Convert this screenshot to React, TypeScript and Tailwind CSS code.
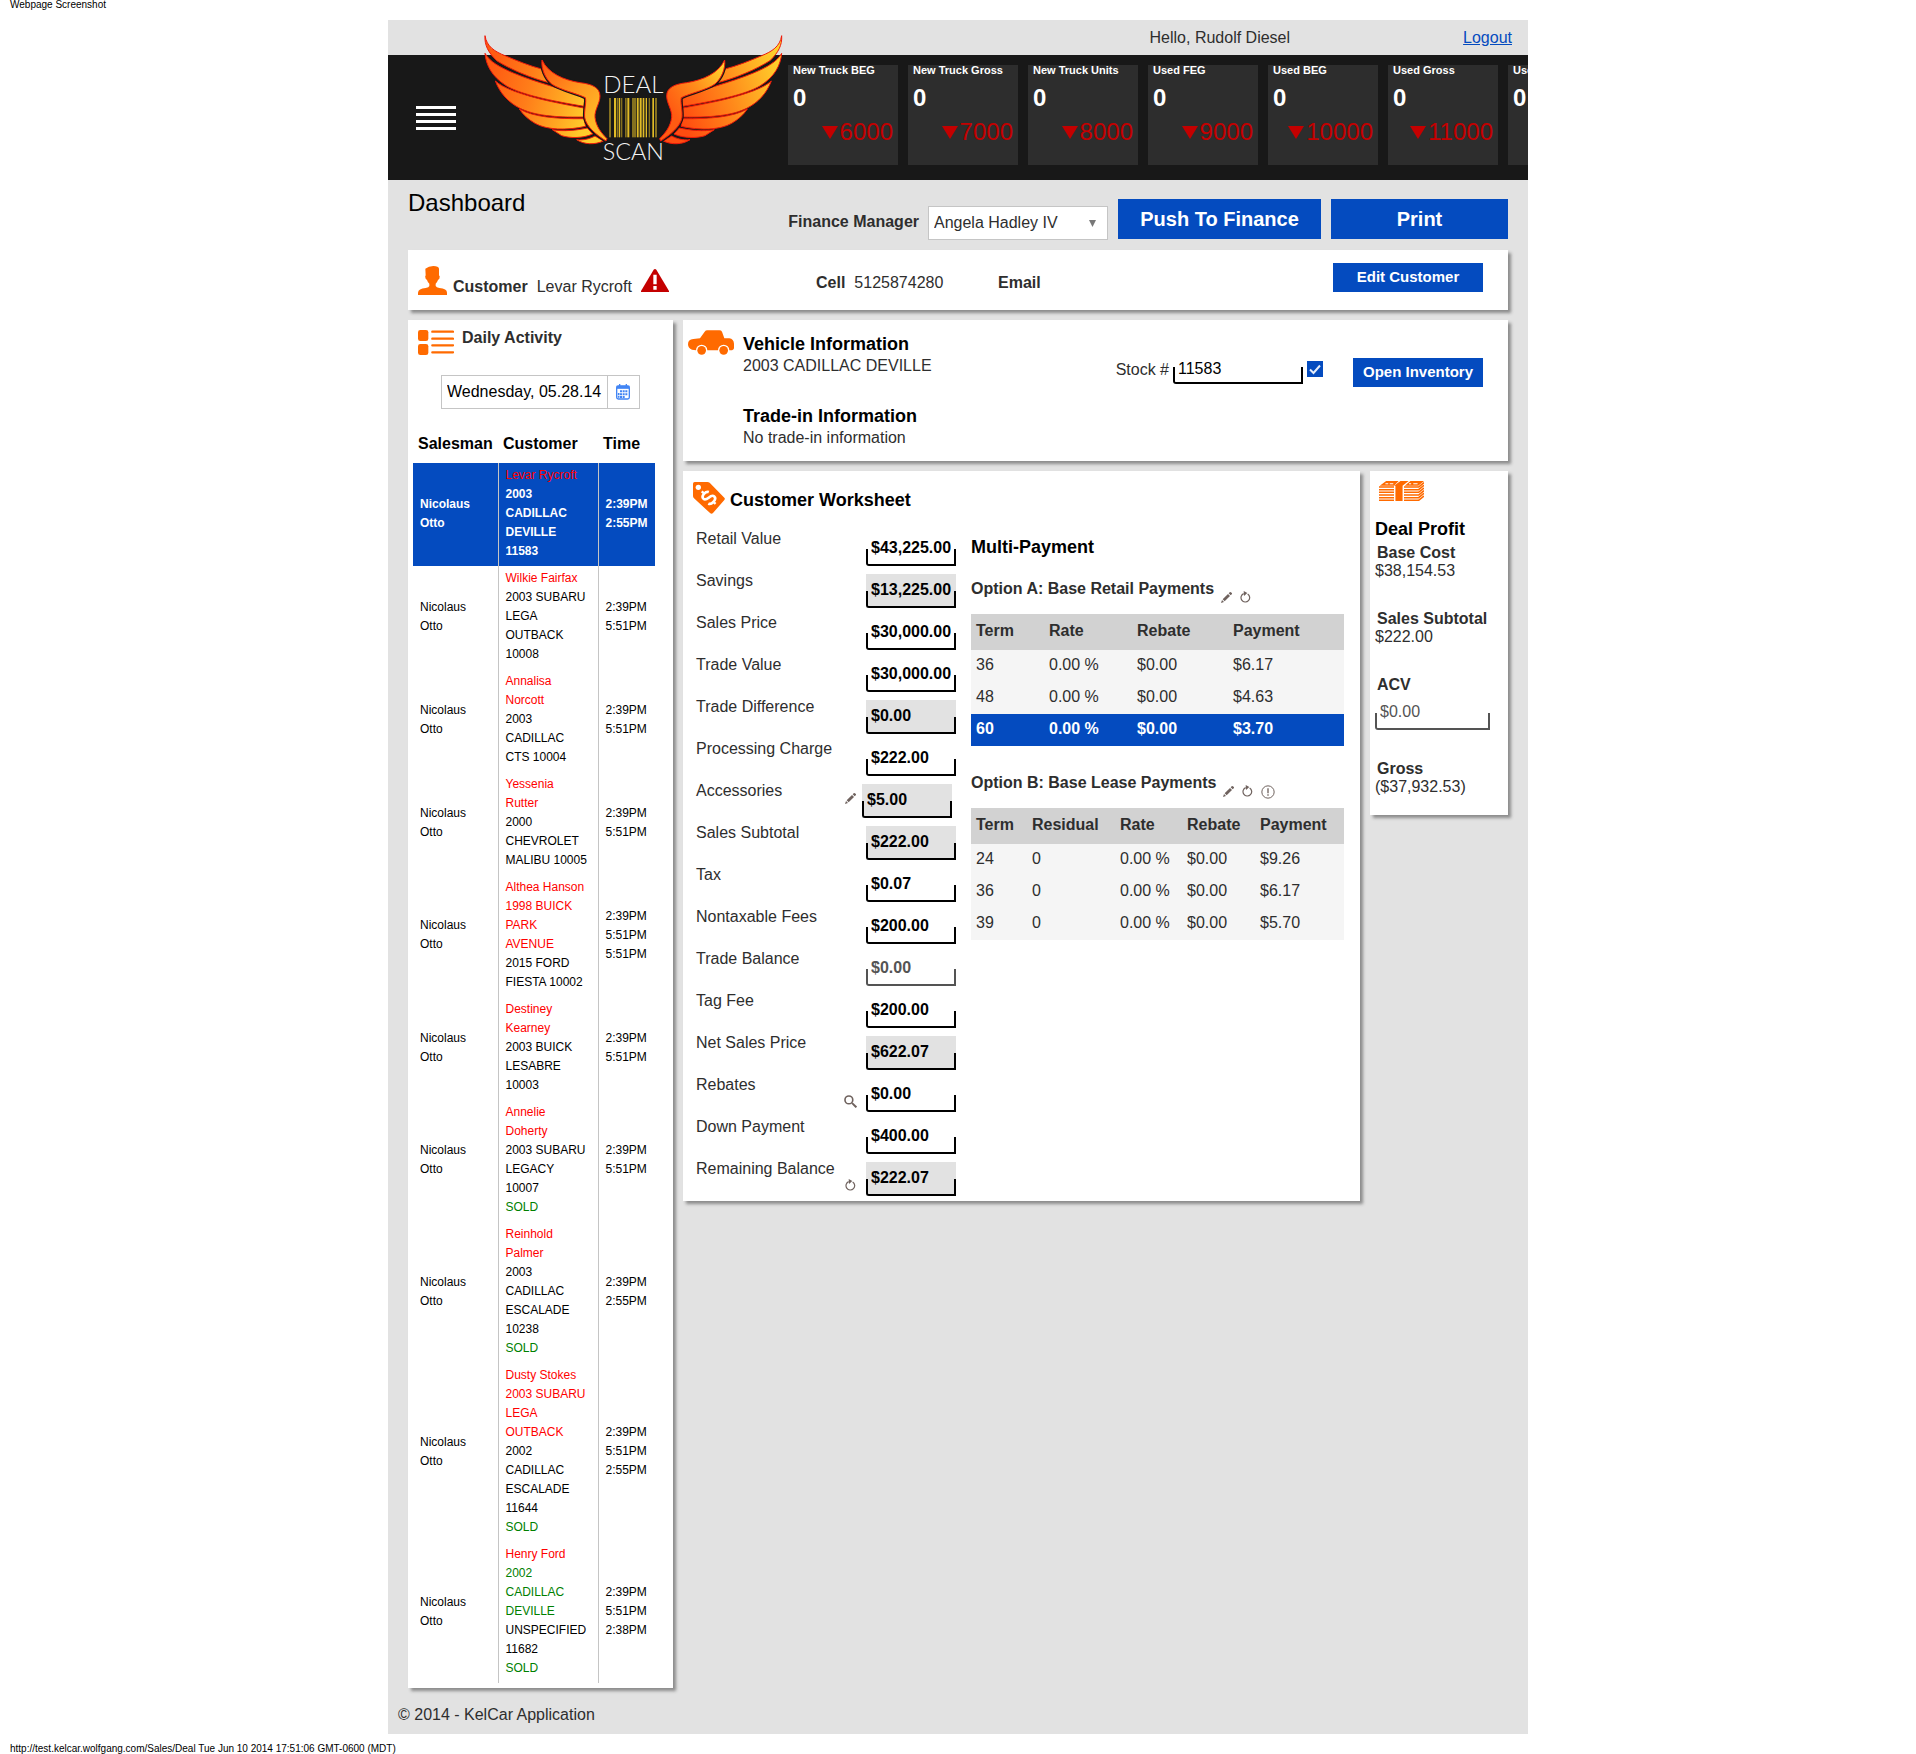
import React from "react";

type Line = { t: string; c?: "red" | "green" };
type Deal = { lines: Line[]; times: string[]; active?: boolean };

const r = (t: string): Line => ({ t, c: "red" });
const g = (t: string): Line => ({ t, c: "green" });
const k = (t: string): Line => ({ t });

const deals: Deal[] = [
  { active: true, lines: [r("Levar Rycroft"), k("2003"), k("CADILLAC"), k("DEVILLE"), k("11583")], times: ["2:39PM", "2:55PM"] },
  { lines: [r("Wilkie Fairfax"), k("2003 SUBARU"), k("LEGA"), k("OUTBACK"), k("10008")], times: ["2:39PM", "5:51PM"] },
  { lines: [r("Annalisa"), r("Norcott"), k("2003"), k("CADILLAC"), k("CTS 10004")], times: ["2:39PM", "5:51PM"] },
  { lines: [r("Yessenia"), r("Rutter"), k("2000"), k("CHEVROLET"), k("MALIBU 10005")], times: ["2:39PM", "5:51PM"] },
  { lines: [r("Althea Hanson"), r("1998 BUICK"), r("PARK"), r("AVENUE"), k("2015 FORD"), k("FIESTA 10002")], times: ["2:39PM", "5:51PM", "5:51PM"] },
  { lines: [r("Destiney"), r("Kearney"), k("2003 BUICK"), k("LESABRE"), k("10003")], times: ["2:39PM", "5:51PM"] },
  { lines: [r("Annelie"), r("Doherty"), k("2003 SUBARU"), k("LEGACY"), k("10007"), g("SOLD")], times: ["2:39PM", "5:51PM"] },
  { lines: [r("Reinhold"), r("Palmer"), k("2003"), k("CADILLAC"), k("ESCALADE"), k("10238"), g("SOLD")], times: ["2:39PM", "2:55PM"] },
  { lines: [r("Dusty Stokes"), r("2003 SUBARU"), r("LEGA"), r("OUTBACK"), k("2002"), k("CADILLAC"), k("ESCALADE"), k("11644"), g("SOLD")], times: ["2:39PM", "5:51PM", "2:55PM"] },
  { lines: [r("Henry Ford"), g("2002"), g("CADILLAC"), g("DEVILLE"), k("UNSPECIFIED"), k("11682"), g("SOLD")], times: ["2:39PM", "5:51PM", "2:38PM"] },
];

const tiles = [
  ["New Truck BEG", "6000"],
  ["New Truck Gross", "7000"],
  ["New Truck Units", "8000"],
  ["Used FEG", "9000"],
  ["Used BEG", "10000"],
  ["Used Gross", "11000"],
  ["Used Units", "12000"],
];

type Row = { label: string; value: string; calc?: boolean; disabled?: boolean; icon?: "pencil" | "search" | "refresh" };
const worksheet: Row[] = [
  { label: "Retail Value", value: "$43,225.00" },
  { label: "Savings", value: "$13,225.00", calc: true },
  { label: "Sales Price", value: "$30,000.00" },
  { label: "Trade Value", value: "$30,000.00" },
  { label: "Trade Difference", value: "$0.00", calc: true },
  { label: "Processing Charge", value: "$222.00" },
  { label: "Accessories", value: "$5.00", calc: true, icon: "pencil" },
  { label: "Sales Subtotal", value: "$222.00", calc: true },
  { label: "Tax", value: "$0.07" },
  { label: "Nontaxable Fees", value: "$200.00" },
  { label: "Trade Balance", value: "$0.00", disabled: true },
  { label: "Tag Fee", value: "$200.00" },
  { label: "Net Sales Price", value: "$622.07", calc: true },
  { label: "Rebates", value: "$0.00", icon: "search" },
  { label: "Down Payment", value: "$400.00" },
  { label: "Remaining Balance", value: "$222.07", calc: true, icon: "refresh" },
];

const panel = "bg-white shadow-[3px_3px_3px_#8c8c8c]";
const bracket =
  "relative after:pointer-events-none after:absolute after:inset-x-0 after:bottom-0 after:h-[17px] after:rounded-bl-[3px] after:border-2 after:border-t-0 after:content-['']";

function PencilIcon() {
  return (
    <svg viewBox="0 0 33 33" className="block size-[11px]" fill="#6f625e">
      <path d="M0 33 3 24 9 30ZM5 22 21 6 27 12 11 28ZM23 4 27 0Q30 0 33 4V6L29 10Z" />
    </svg>
  );
}

function RefreshIcon() {
  return (
    <svg viewBox="0 0 33 36" className="block h-3 w-[11px]">
      <path d="M11 8A13 13 0 1 0 23 9" fill="none" stroke="#6f625e" strokeWidth="3.6" />
      <path d="M11 0 22 6 12 15Z" fill="#6f625e" />
    </svg>
  );
}

function SearchIcon() {
  return (
    <svg viewBox="0 0 40 40" className="block size-[13px]" fill="none" stroke="#6f625e">
      <circle cx="15" cy="15" r="12" strokeWidth="5" />
      <path d="M25 25 38 38" strokeWidth="6" />
    </svg>
  );
}

function AlertIcon() {
  return (
    <svg viewBox="0 0 42 42" className="block size-3.5" fill="none" stroke="#6f625e">
      <circle cx="21" cy="21" r="18.5" strokeWidth="3" />
      <path d="M21 10V25M21 28V32" strokeWidth="4" />
    </svg>
  );
}

const feathers = [
  "M15 17C20 50 45 65 75 77C110 92 150 108 185 117C190 135 200 150 214 160C150 144 90 117 50 92C25 68 13 45 15 17Z",
  "M15 70C30 96 60 112 100 129C170 158 250 178 315 199L312 229C210 212 125 194 80 168C35 140 18 105 15 70Z",
  "M46 153C70 175 120 191 180 207C230 219 280 228 312 234L311 261C220 263 160 255 120 235C85 217 60 190 46 153Z",
  "M118 237C160 261 230 267 312 266L317 289C260 302 200 300 165 280C145 268 130 255 118 237Z",
  "M217 299C250 305 290 301 322 294L338 312C310 325 270 325 245 317Z",
  "M290 329C312 332 332 325 345 318L370 333C345 345 312 344 290 329Z",
];
const thumb =
  "M186 90C205 130 250 150 300 158C335 162 360 172 360 198C360 220 343 240 345 262C348 290 365 310 381 326L378 333C350 315 318 290 314 262C312 240 320 215 316 203C290 190 240 180 215 162C195 145 183 115 186 90Z";

const bars = [
  [387, 6, 0], [402, 6, 1], [410, 4, 0], [416, 4, 1], [422, 5, 0], [435, 5, 0], [442, 6, 1], [456, 13, 0],
  [471, 5, 1], [479, 6, 1], [488, 5, 1], [497, 4, 1], [506, 4, 0], [517, 5, 1], [525, 6, 0],
];

function Wing({ fill, thumbFill }: { fill: string; thumbFill: string }) {
  return (
    <g fill={fill} stroke="#ef1a0a" strokeWidth="3" strokeLinejoin="round">
      {feathers.map((d) => (
        <path key={d} d={d} />
      ))}
      <path d={thumb} stroke="#181818" strokeWidth="10" clipPath="url(#inside)" />
      <path d={thumb} fill={thumbFill} />
    </g>
  );
}

function Logo() {
  return (
    <svg viewBox="0 0 918 405" className="relative -mt-[25px] h-[135px] w-[306px] shrink-0" role="img" aria-label="Deal Scan">
      <defs>
        <linearGradient id="left" gradientUnits="userSpaceOnUse" x1="30" y1="130" x2="330" y2="200">
          <stop offset="0" stopColor="#ff5a12" />
          <stop offset="0.4" stopColor="#ff7d19" />
          <stop offset="0.75" stopColor="#ffa822" />
          <stop offset="1" stopColor="#ffcb2b" />
        </linearGradient>
        <linearGradient id="left-thumb" gradientUnits="userSpaceOnUse" x1="186" y1="100" x2="370" y2="240">
          <stop offset="0" stopColor="#ff5a12" />
          <stop offset="0.6" stopColor="#ff9a20" />
          <stop offset="1" stopColor="#ffb827" />
        </linearGradient>
        <linearGradient id="right" gradientUnits="userSpaceOnUse" x1="330" y1="220" x2="20" y2="110">
          <stop offset="0" stopColor="#ff4c10" />
          <stop offset="0.5" stopColor="#ff8c1b" />
          <stop offset="1" stopColor="#ffd02b" />
        </linearGradient>
        <linearGradient id="right-thumb" gradientUnits="userSpaceOnUse" x1="360" y1="220" x2="190" y2="110">
          <stop offset="0" stopColor="#ff5a12" />
          <stop offset="0.5" stopColor="#ff8c1b" />
          <stop offset="1" stopColor="#ffd02b" />
        </linearGradient>
        <clipPath id="inside">
          <path d="M0 76H460V405H0Z" />
        </clipPath>
      </defs>
      <Wing fill="url(#left)" thumbFill="url(#left-thumb)" />
      <g transform="translate(920 0) scale(-1 1)">
        <Wing fill="url(#right)" thumbFill="url(#right-thumb)" />
      </g>
      {bars.map(([x, w, bright]) => (
        <rect key={x} x={x} y="204" width={w} height="118" fill={bright ? "#e0bb27" : "#84701f"} />
      ))}
      <text x="460" y="188" textAnchor="middle" fontSize="72" fontWeight="300" fill="#f4f4f4" fontFamily="Lato, sans-serif">
        DEAL
      </text>
      <text x="460" y="389" textAnchor="middle" fontSize="70" fontWeight="300" fill="#f4f4f4" fontFamily="Lato, sans-serif">
        SCAN
      </text>
    </svg>
  );
}

function Header() {
  return (
    <header>
      <div className="flex h-[35px] items-center justify-end gap-[173px] pr-4">
        <span>Hello, Rudolf Diesel</span>
        <a href="#logout" className="text-[#044bbf] underline">Logout</a>
      </div>
      <div className="flex h-[125px] bg-[#181818] pl-7">
        <button aria-label="Menu" className="mt-[51px] flex w-10 shrink-0 flex-col gap-1 self-start">
          <span className="h-[3px] w-full bg-white" />
          <span className="h-[3px] w-full bg-white" />
          <span className="h-[3px] w-full bg-white" />
          <span className="h-[3px] w-full bg-white" />
        </button>
        <div className="ml-6 shrink-0">
          <Logo />
        </div>
        <div className="ml-0.5 mt-2.5 flex min-w-0 flex-1 gap-2.5 overflow-hidden">
          {tiles.map(([name, delta]) => (
            <div key={name} className="h-[100px] w-[110px] shrink-0 bg-[#2d2d2d] px-[5px] text-white">
              <div className="whitespace-nowrap text-[11px] leading-[11px] font-bold">{name}</div>
              <div className="mt-2 text-2xl leading-7 font-bold">0</div>
              <div className="mt-1.5 flex items-center justify-end gap-0.5 text-2xl leading-7 text-[#c40000]">
                <svg viewBox="0 0 16 13" className="h-[13px] w-4" fill="currentColor">
                  <path d="M0 0H16L8 13Z" />
                </svg>
                {delta}
              </div>
            </div>
          ))}
        </div>
      </div>
    </header>
  );
}

function Toolbar() {
  return (
    <div className="flex h-[70px] items-start px-5 text-black">
      <h1 className="mt-[9px] text-2xl leading-7 text-black">Dashboard</h1>
      <label htmlFor="manager" className="mt-[30px] ml-auto leading-6 font-bold text-[#2e2e2e]">Finance Manager</label>
      <div className="relative mt-[26px] ml-[9px]">
        <select id="manager" className="h-[34px] w-[180px] appearance-none border border-[#c5c5c5] bg-white pl-[5px] text-[#2e2e2e]">
          <option>Angela Hadley IV</option>
        </select>
        <svg viewBox="0 0 7 7" className="pointer-events-none absolute top-[14px] right-3 size-[7px]" fill="#787878">
          <path d="M0 0H7L3.5 7Z" />
        </svg>
      </div>
      <button className="mt-[19px] ml-2.5 h-10 w-[203px] bg-[#044bbf] text-xl font-bold text-white">Push To Finance</button>
      <button className="mt-[19px] ml-2.5 h-10 w-[177px] bg-[#044bbf] text-xl font-bold text-white">Print</button>
    </div>
  );
}

function CustomerBar() {
  return (
    <section className={`${panel} flex h-[60px] items-start pl-2.5`}>
      <div className="flex w-[398px] items-start leading-6">
        <svg viewBox="0 0 87 87" className="mt-4 size-[29px]" fill="#ff6a00">
          <path d="M22 8Q32 0 46 0Q62 0 63 8V28Q67 31 64 38L60 42Q57 50 53 53V60Q55 64 64 66Q87 68 87 80V87H0V80Q1 68 23 66Q33 64 34 60V53Q29 49 27 42L23 38Q20 31 23 28Z" />
        </svg>
        <b className="mt-[25px] ml-1.5">Customer</b>
        <span className="mt-[25px] ml-[9px]">Levar Rycroft</span>
        <svg viewBox="0 0 84 69" className="mt-[19px] ml-[9px] h-[23px] w-7">
          <path d="M38 2Q42-2 46 2L84 66V69H0V66Z" fill="#c40000" />
          <path d="M42 17V46M42 51V62" stroke="#fff" strokeWidth="10" strokeLinecap="butt" />
        </svg>
      </div>
      <div className="mt-[21px] w-[182px] leading-6">
        <b>Cell</b>
        <span className="ml-[9px]">5125874280</span>
      </div>
      <b className="mt-[21px] leading-6">Email</b>
      <button className="mt-[13px] mr-[25px] ml-auto h-[29px] w-[150px] bg-[#044bbf] text-[15px] font-bold text-white">Edit Customer</button>
    </section>
  );
}

function tone(line: Line) {
  if (line.c === "red") return "block font-normal text-[#ff0000]";
  if (line.c === "green") return "block text-[#008000]";
  return "block";
}

function DailyActivity() {
  return (
    <section className={`${panel} w-[265px] shrink-0 self-start pb-[5px]`}>
      <div className="flex h-[55px] items-start pl-2.5">
        <svg viewBox="0 0 108 75" className="mt-2.5 h-[25px] w-9" fill="#ff6a00">
          <rect width="31" height="33" rx="7" />
          <rect y="42" width="31" height="33" rx="7" />
          <path d="M43 5H105M43 26H105M43 46H105M43 67H105" stroke="#ff6a00" strokeWidth="7" strokeLinecap="round" />
        </svg>
        <h2 className="mt-1.5 ml-2 leading-6 font-bold">Daily Activity</h2>
      </div>
      <div className="ml-[33px] flex h-[34px] w-[199px] border border-[#c5c5c5] text-black">
        <input aria-label="Activity date" defaultValue="Wednesday, 05.28.14" className="w-[166px] border-r border-[#c5c5c5] pl-[5px] outline-none" />
        <button aria-label="Open calendar" className="flex flex-1 items-center justify-center pr-0.5">
          <svg viewBox="0 0 42 48" className="h-4 w-3.5" fill="none" stroke="#4285f4">
            <rect x="2" y="6" width="38" height="39" rx="5" strokeWidth="4" />
            <path d="M2 10H40" strokeWidth="9" />
            <path d="M11 0V8M31 0V8" strokeWidth="4" />
            <path d="M15 19V42M23 19V42M31 19V34" strokeWidth="6" strokeDasharray="6 2.5" />
            <path d="M8 27V42" strokeWidth="5" strokeDasharray="6 2.5" />
          </svg>
        </button>
      </div>
      <table className="mt-3.5 ml-[5px] w-[242px] table-fixed border-collapse text-left text-black">
        <colgroup>
          <col className="w-[85px]" />
          <col className="w-[100px]" />
          <col />
        </colgroup>
        <thead>
          <tr className="h-10">
            <th className="pt-0.5 pl-[5px]">Salesman</th>
            <th className="pt-0.5 pl-[5px]">Customer</th>
            <th className="pt-0.5 pl-[5px]">Time</th>
          </tr>
        </thead>
        <tbody className="text-xs leading-[19px]">
          {deals.map((d, i) => (
            <tr key={i} className={d.active ? "bg-[#044bbf] font-bold text-white" : ""}>
              <td className="pt-[3px] pb-[5px] pl-[7px]">
                <span className="block">Nicolaus</span>
                <span className="block">Otto</span>
              </td>
              <td className="border-l border-[#c5c5c5] pt-[3px] pb-[5px] pl-[7px]">
                {d.lines.map((l, j) => (
                  <span key={j} className={tone(l)}>{l.t}</span>
                ))}
              </td>
              <td className="border-l border-[#c5c5c5] pt-[3px] pb-[5px] pl-[7px]">
                {d.times.map((t, j) => (
                  <span key={j} className="block">{t}</span>
                ))}
              </td>
            </tr>
          ))}
        </tbody>
      </table>
    </section>
  );
}

function VehicleInfo() {
  return (
    <section className={`${panel} flex h-[141px] items-start pl-[5px]`}>
      <svg viewBox="0 0 138 73" className="mt-2.5 h-[25px] w-[46px]" fill="#ff6a00">
        <path d="M36 24 50 4Q53 0 58 0H94Q100 0 102 4L109 24H124Q137 26 138 40V54Q137 59 132 60H124A17 17 0 0 0 90 60H58A17 17 0 0 0 24 60L12 58Q0 54 0 42Q0 27 16 26Z" />
        <circle cx="41" cy="60" r="13" />
        <circle cx="107" cy="60" r="13" />
      </svg>
      <div className="mt-3 ml-[9px]">
        <h2 className="text-lg leading-6 font-bold text-black">Vehicle Information</h2>
        <p className="leading-5">2003 CADILLAC DEVILLE</p>
        <h2 className="mt-7 text-lg leading-6 font-bold text-black">Trade-in Information</h2>
        <p className="leading-5">No trade-in information</p>
      </div>
      <label htmlFor="stock" className="mt-[38px] ml-auto leading-6">Stock #</label>
      <span className={`${bracket} mt-[30px] ml-1 block w-[130px] text-black after:border-black`}>
        <input id="stock" defaultValue="11583" className="block h-[34px] w-full bg-transparent px-[5px] pt-1 outline-none" />
      </span>
      <span className="relative mt-[41px] ml-1 size-4">
        <input type="checkbox" defaultChecked aria-label="Stock number verified" className="block size-4 appearance-none bg-[#044bbf]" />
        <svg viewBox="0 0 16 16" className="pointer-events-none absolute inset-0" fill="none" stroke="#e5edfa" strokeWidth="2">
          <path d="M3 8.5 6.5 12 13 4.5" />
        </svg>
      </span>
      <button className="mt-[38px] mr-[25px] ml-[30px] h-[29px] w-[130px] bg-[#044bbf] text-[15px] font-bold text-white">Open Inventory</button>
    </section>
  );
}

function RowIcon({ icon }: { icon: Row["icon"] }) {
  if (icon === "pencil") return <button aria-label="Edit accessories" className="mt-3"><PencilIcon /></button>;
  if (icon === "search") return <button aria-label="Find rebates" className="mt-5"><SearchIcon /></button>;
  if (icon === "refresh") return <button aria-label="Recalculate balance" className="mt-5"><RefreshIcon /></button>;
  return null;
}

function WorksheetRow({ row }: { row: Row }) {
  const id = row.label.toLowerCase().replace(/ /g, "-");
  const ink = row.disabled ? "text-[#545454] after:border-[#545454]" : "text-black after:border-black";
  return (
    <div className="flex h-[42px] items-start">
      <label htmlFor={id} className="flex-1 whitespace-nowrap leading-5">{row.label}</label>
      <div className="flex w-[13px] items-start justify-center">
        <RowIcon icon={row.icon} />
      </div>
      <span className={`${bracket} ${ink} ${row.calc ? "bg-[#e2e2e2]" : ""} ${row.icon === "pencil" ? "mr-1 ml-[5px]" : "ml-[9px]"} mt-[3px] block w-[90px]`}>
        <input id={id} defaultValue={row.value} disabled={row.disabled} className="block h-[34px] w-full bg-transparent pb-[3px] pl-[5px] font-bold outline-none" />
      </span>
    </div>
  );
}

function PaymentTable({ head, rows, cols, active }: { head: string[]; rows: string[][]; cols: string[]; active?: number }) {
  return (
    <table className="mt-3 w-full table-fixed border-collapse text-left">
      <colgroup>
        {cols.map((c, i) => (
          <col key={i} className={c} />
        ))}
      </colgroup>
      <thead>
        <tr className="h-9 bg-[#d2d2d2]">
          {head.map((h) => (
            <th key={h} className="pb-0.5 pl-[5px]">{h}</th>
          ))}
        </tr>
      </thead>
      <tbody>
        {rows.map((cells, i) => (
          <tr key={i} className={i === active ? "h-8 bg-[#044bbf] font-bold text-white" : "h-8 bg-[#f5f5f5]"}>
            {cells.map((c, j) => (
              <td key={j} className="pb-0.5 pl-[5px]">{c}</td>
            ))}
          </tr>
        ))}
      </tbody>
    </table>
  );
}

function CustomerWorksheet() {
  return (
    <section className={`${panel} min-w-0 flex-1 self-start`}>
      <div className="flex h-[58px] items-start pl-2.5">
        <svg viewBox="0 0 96 96" className="mt-[11px] size-8">
          <path d="M0 5Q0 0 5 0H43Q47 0 50 2L94 47Q97 50 94 54L60 93Q56 97 52 94L3 49Q0 46 0 42Z" fill="#ff6a00" />
          <circle cx="16" cy="16" r="8" fill="#fff" />
          <g transform="translate(47 47) rotate(-48)" fill="none" stroke="#fff">
            <path d="M13-11Q10-18 0-18Q-13-18-13-9Q-13-2 0 0Q14 2 14 10Q14 19 0 19Q-12 19-14 11" strokeWidth="8" />
            <path d="M0-28V-17M0 18V28" strokeWidth="7" />
          </g>
        </svg>
        <h2 className="mt-[17px] ml-[5px] text-lg leading-6 font-bold text-black">Customer Worksheet</h2>
      </div>
      <div className="flex items-start pr-4 pl-[13px]">
        <div className="w-[260px] shrink-0">
          {worksheet.map((row) => (
            <WorksheetRow key={row.label} row={row} />
          ))}
        </div>
        <div className="ml-[15px] min-w-0 flex-1">
          <h2 className="mt-1.5 text-lg leading-6 font-bold text-black">Multi-Payment</h2>
          <div className="mt-[19px] flex h-6 items-start">
            <h3 className="leading-[22px] font-bold">Option A: Base Retail Payments</h3>
            <button aria-label="Edit option A" className="mt-3.5 ml-[7px]"><PencilIcon /></button>
            <button aria-label="Refresh option A" className="mt-[13px] ml-2"><RefreshIcon /></button>
          </div>
          <PaymentTable
            cols={["w-[73px]", "w-[88px]", "w-[96px]", ""]}
            head={["Term", "Rate", "Rebate", "Payment"]}
            rows={[
              ["36", "0.00 %", "$0.00", "$6.17"],
              ["48", "0.00 %", "$0.00", "$4.63"],
              ["60", "0.00 %", "$0.00", "$3.70"],
            ]}
            active={2}
          />
          <div className="mt-[26px] flex h-6 items-start">
            <h3 className="leading-[22px] font-bold">Option B: Base Lease Payments</h3>
            <button aria-label="Edit option B" className="mt-3.5 ml-[7px]"><PencilIcon /></button>
            <button aria-label="Refresh option B" className="mt-[13px] ml-2"><RefreshIcon /></button>
            <button aria-label="Option B alert" className="mt-[13px] ml-2"><AlertIcon /></button>
          </div>
          <PaymentTable
            cols={["w-[56px]", "w-[88px]", "w-[67px]", "w-[73px]", ""]}
            head={["Term", "Residual", "Rate", "Rebate", "Payment"]}
            rows={[
              ["24", "0", "0.00 %", "$0.00", "$9.26"],
              ["36", "0", "0.00 %", "$0.00", "$6.17"],
              ["39", "0", "0.00 %", "$0.00", "$5.70"],
            ]}
          />
        </div>
      </div>
    </section>
  );
}

function DealProfit() {
  return (
    <section className={`${panel} w-[138px] shrink-0 self-start pb-[15px] pl-[5px] leading-[18px]`}>
      <svg viewBox="0 0 126 60" className="mt-2.5 ml-1 block h-5 w-[45px]" preserveAspectRatio="none">
        <path d="M2 14 20 0H55L42 14ZM72 14 88 0H126L110 14Z" fill="#ff6a00" />
        <path d="M42 14 60 0H83L66 14V60H46V14Z" fill="#ff6a00" />
        <g stroke="#ff6a00" strokeWidth="4.5" fill="none">
          <path d="M0 18H42M0 26H42M0 34H42M0 42H42M0 50H42M0 58H42" />
          <path d="M70 18H111L126 5M70 26H111L126 13M70 34H111L126 21M70 42H111L126 29M70 50H111L126 37M70 58H111L126 45" />
        </g>
        <path d="M18 8H26M30 8H40M84 8H90M96 8H108" stroke="#fff" strokeWidth="3" />
      </svg>
      <h2 className="mt-4 text-lg leading-6 font-bold text-black">Deal Profit</h2>
      <p className="mt-[3px] pl-0.5 font-bold">Base Cost</p>
      <p>$38,154.53</p>
      <p className="mt-[30px] pl-0.5 font-bold">Sales Subtotal</p>
      <p>$222.00</p>
      <label htmlFor="acv" className="mt-[30px] block pl-0.5 font-bold">ACV</label>
      <span className={`${bracket} mt-0.5 block w-[115px] text-[#545454] after:border-[#545454]`}>
        <input id="acv" disabled defaultValue="$0.00" className="block h-[34px] w-full bg-transparent pb-[3px] pl-[5px] outline-none" />
      </span>
      <p className="mt-[30px] pl-0.5 font-bold">Gross</p>
      <p className="mb-1">($37,932.53)</p>
    </section>
  );
}

export default function App() {
  return (
    <div className="overflow-x-hidden bg-white font-['Liberation_Sans',Arial,sans-serif] text-base text-[#2e2e2e]">
      <div className="h-5 pl-2.5 text-[10px] leading-[10px] text-black">Webpage Screenshot</div>
      <div className="mx-auto max-w-[1140px] bg-[#e2e2e2]">
        <Header />
        <Toolbar />
        <main className="flex flex-col gap-2.5 px-5">
          <CustomerBar />
          <div className="flex items-start gap-2.5">
            <DailyActivity />
            <div className="flex min-w-0 flex-1 flex-col gap-2.5">
              <VehicleInfo />
              <div className="flex items-start gap-2.5">
                <CustomerWorksheet />
                <DealProfit />
              </div>
            </div>
          </div>
        </main>
        <footer className="pt-[15px] pb-[7px] pl-2.5 leading-6">© 2014 - KelCar Application</footer>
      </div>
      <div className="pt-2.5 pl-2.5 text-[10px] leading-[10px] text-black">
        http://test.kelcar.wolfgang.com/Sales/Deal Tue Jun 10 2014 17:51:06 GMT-0600 (MDT)
      </div>
    </div>
  );
}
